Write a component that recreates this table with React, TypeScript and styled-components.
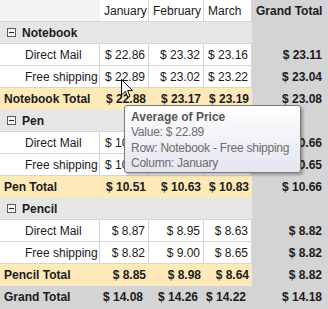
import React from 'react';
import styled, { createGlobalStyle } from 'styled-components';

type Kind = 'corner' | 'head' | 'headTotal' | 'group' | 'data' | 'total' | 'grand' | 'gt';

interface Product {
  name: string;
  rows: { label: string; values: string[]; total: string }[];
  totals: string[];
  total: string;
}

const months = ['January', 'February', 'March'];

const products: Product[] = [
  {
    name: 'Notebook',
    rows: [
      { label: 'Direct Mail', values: ['$ 22.86', '$ 23.32', '$ 23.16'], total: '$ 23.11' },
      { label: 'Free shipping', values: ['$ 22.89', '$ 23.02', '$ 23.22'], total: '$ 23.04' },
    ],
    totals: ['$ 22.88', '$ 23.17', '$ 23.19'],
    total: '$ 23.08',
  },
  {
    name: 'Pen',
    rows: [
      { label: 'Direct Mail', values: ['$ 10.52', '$ 10.64', '$ 10.82'], total: '$ 10.66' },
      { label: 'Free shipping', values: ['$ 10.50', '$ 10.62', '$ 10.84'], total: '$ 10.65' },
    ],
    totals: ['$ 10.51', '$ 10.63', '$ 10.83'],
    total: '$ 10.66',
  },
  {
    name: 'Pencil',
    rows: [
      { label: 'Direct Mail', values: ['$ 8.87', '$ 8.95', '$ 8.63'], total: '$ 8.82' },
      { label: 'Free shipping', values: ['$ 8.82', '$ 9.00', '$ 8.65'], total: '$ 8.82' },
    ],
    totals: ['$ 8.85', '$ 8.98', '$ 8.64'],
    total: '$ 8.82',
  },
];

const grandTotals = ['$ 14.08', '$ 14.26', '$ 14.22'];

const GlobalStyle = createGlobalStyle`
  html, body {
    margin: 0;
    padding: 0;
    background: #fff;
  }
  body {
    font-family: "Liberation Sans", Arial, sans-serif;
    font-size: 12px;
    color: #1b1b1b;
  }
`;

const Frame = styled.div`
  position: relative;
  width: 328px;
  height: 309px;
  overflow: hidden;
  background: #d4d4d4;
`;

const Grid = styled.div`
  display: grid;
  grid-template-columns: 100px 49px 55px 48px 76px;
  grid-auto-rows: 22px;
`;

const backgrounds: Record<Kind, string> = {
  corner: '#f3f3f3',
  head: '#ffffff',
  headTotal: '#d4d4d4',
  group: '#e6e6e6',
  data: '#ffffff',
  total: '#fee9b9',
  grand: '#d4d4d4',
  gt: '#d4d4d4',
};

const Cell = styled.div<{ $kind: Kind; $right?: boolean; $indent?: number; $span?: number }>`
  box-sizing: border-box;
  display: flex;
  align-items: center;
  justify-content: ${p => (p.$right ? 'flex-end' : 'flex-start')};
  padding: 0 ${p => (p.$kind === 'gt' || p.$kind === 'grand' ? 6 : 3)}px 0 ${p => p.$indent ?? 4}px;
  grid-column: ${p => (p.$span ? `span ${p.$span}` : 'auto')};
  background: ${p => backgrounds[p.$kind]};
  font-weight: ${p => (p.$kind === 'head' || p.$kind === 'data' ? 400 : 700)};
  white-space: nowrap;
  overflow: hidden;
  border-right: ${p => (p.$kind === 'head' || p.$kind === 'data' ? '1px solid #d6d6d6' : 'none')};
  border-bottom: ${p =>
    p.$kind === 'head' || p.$kind === 'data' || p.$kind === 'corner' || p.$kind === 'group'
      ? '1px solid #d6d6d6'
      : 'none'};
`;

const Expander = styled.span`
  box-sizing: border-box;
  position: relative;
  width: 9px;
  height: 9px;
  margin-right: 6px;
  border: 1px solid #5a5a5a;
  background: #f6f6f6;

  &::after {
    content: '';
    position: absolute;
    left: 1px;
    right: 1px;
    top: 3px;
    height: 1px;
    background: #222;
  }
`;

const Tooltip = styled.div`
  position: absolute;
  left: 124px;
  top: 105px;
  width: 177px;
  height: 68px;
  box-sizing: border-box;
  padding: 4px 6px;
  border: 1px solid #7a7a7a;
  border-radius: 3px;
  background: linear-gradient(#ffffff, #e4e5f0);
  box-shadow: 2px 2px 3px rgba(0, 0, 0, 0.3);
  color: #6d6d6d;
  line-height: 15.3px;
  white-space: nowrap;
  letter-spacing: -0.25px;
`;

const TipTitle = styled.div`
  font-weight: 700;
  color: #575757;
  letter-spacing: 0;
`;

const Cursor = styled.svg`
  position: absolute;
  left: 121px;
  top: 79px;
`;

const App: React.FC = () => (
  <Frame>
    <GlobalStyle />
    <Grid>
      <Cell $kind="corner" />
      {months.map(m => (
        <Cell key={m} $kind="head">{m}</Cell>
      ))}
      <Cell $kind="headTotal">Grand Total</Cell>

      {products.map(p => (
        <React.Fragment key={p.name}>
          <Cell $kind="group" $span={4} $indent={7}>
            <Expander />
            {p.name}
          </Cell>
          <Cell $kind="gt" />
          {p.rows.map(r => (
            <React.Fragment key={r.label}>
              <Cell $kind="data" $indent={25}>{r.label}</Cell>
              {r.values.map((v, i) => (
                <Cell key={i} $kind="data" $right>{v}</Cell>
              ))}
              <Cell $kind="gt" $right>{r.total}</Cell>
            </React.Fragment>
          ))}
          <Cell $kind="total">{p.name} Total</Cell>
          {p.totals.map((v, i) => (
            <Cell key={i} $kind="total" $right>{v}</Cell>
          ))}
          <Cell $kind="gt" $right>{p.total}</Cell>
        </React.Fragment>
      ))}

      <Cell $kind="grand">Grand Total</Cell>
      {grandTotals.map((v, i) => (
        <Cell key={i} $kind="grand" $right>{v}</Cell>
      ))}
      <Cell $kind="gt" $right>$ 14.18</Cell>
    </Grid>

    <Tooltip>
      <TipTitle>Average of Price</TipTitle>
      <div>Value: $ 22.89</div>
      <div>Row: Notebook - Free shipping</div>
      <div>Column: January</div>
    </Tooltip>

    <Cursor width="13" height="20" viewBox="0 0 13 20">
      <path
        d="M0.5 0.5 L0.5 16 L4.3 12.4 L6.8 18.3 L9 17.3 L6.6 11.6 L11.5 11.6 Z"
        fill="#fff"
        stroke="#000"
        strokeWidth="1"
        strokeLinejoin="miter"
      />
    </Cursor>
  </Frame>
);

export default App;
